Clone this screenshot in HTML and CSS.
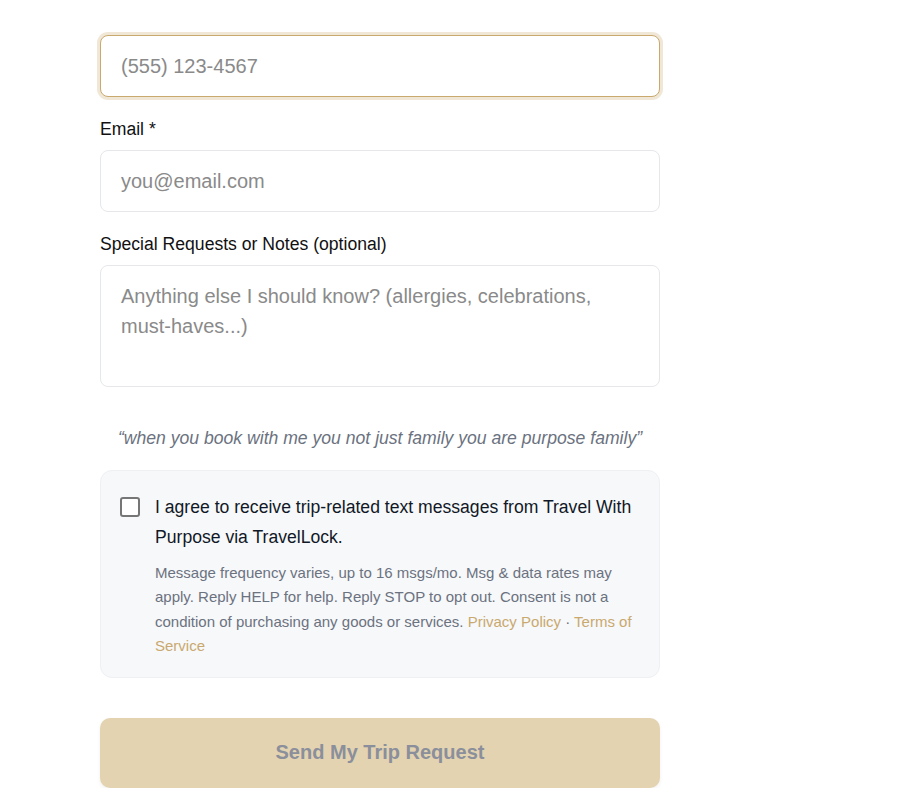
FILE: index.html
```html
<!DOCTYPE html>
<html lang="en">
<head>
<meta charset="utf-8">
<title>Trip Request</title>
<link rel="stylesheet" href="styles.css">
</head>
<body>
<form class="form">
  <div class="field">
    <input class="input focused" type="tel" placeholder="(555) 123-4567">
  </div>
  <div class="field">
    <label class="label">Email *</label>
    <input class="input" type="email" placeholder="you@email.com">
  </div>
  <div class="field">
    <label class="label">Special Requests or Notes (optional)</label>
    <textarea class="input textarea" rows="3" placeholder="Anything else I should know? (allergies, celebrations, must-haves...)"></textarea>
  </div>
  <p class="quote">“when you book with me you not just family you are purpose family”</p>
  <div class="consent">
    <span class="check"></span>
    <div class="consent-body">
      <p class="consent-main">I agree to receive trip-related text messages from Travel With Purpose via TravelLock.</p>
      <p class="consent-fine">Message frequency varies, up to 16 msgs/mo. Msg &amp; data rates may apply. Reply HELP for help. Reply STOP to opt out. Consent is not a condition of purchasing any goods or services. <a href="#" class="link">Privacy Policy</a> · <a href="#" class="link">Terms of Service</a></p>
    </div>
  </div>
  <button type="button" class="submit">Send My Trip Request</button>
</form>
</body>
</html>
```
FILE: styles.css
```css
* { box-sizing: border-box; }
html, body { margin: 0; padding: 0; background: #ffffff; }
body {
  font-family: "Liberation Sans", Arial, sans-serif;
  color: #111827;
}
.form {
  width: 560px;
  margin: 35px 0 0 100px;
  display: flex;
  flex-direction: column;
}
.field {
  display: flex;
  flex-direction: column;
  margin-bottom: 22px;
}
.label {
  font-size: 17.6px;
  line-height: 21px;
  margin-bottom: 10px;
  color: #111111;
}
.input {
  width: 100%;
  font-family: "Liberation Sans", Arial, sans-serif;
  font-size: 20px;
  line-height: 30px;
  padding: 15px 20px;
  border: 1px solid #e5e7eb;
  border-radius: 8px;
  background: #fff;
  color: #111;
  outline: none;
  display: block;
}
.input::placeholder { color: #8a8a8a; }
.focused {
  border-color: #c9a96e;
  box-shadow: 0 0 0 3px rgba(201, 169, 110, 0.28);
}
.textarea {
  resize: none;
  height: 122px;
}
.quote {
  margin: 16px 0 19px;
  text-align: center;
  font-style: italic;
  font-size: 17.6px;
  line-height: 26px;
  color: #6b7280;
}
.consent {
  display: flex;
  gap: 15px;
  padding: 21px 20px 18px 19px;
  background: #f7f8fa;
  border: 1px solid #eef0f3;
  border-radius: 12px;
}
.check {
  flex: none;
  width: 20px;
  height: 20px;
  margin-top: 5px;
  border: 2px solid #767676;
  border-radius: 3px;
  background: #fff;
}
.consent-body { flex: 1; }
.consent-main {
  margin: 0 0 9px;
  font-size: 17.6px;
  line-height: 30px;
  color: #111827;
}
.consent-fine {
  margin: 0;
  font-size: 15px;
  line-height: 24.4px;
  color: #6b7280;
}
.link { color: #c9a96e; text-decoration: none; }
.submit {
  margin-top: 40px;
  height: 70px;
  border: none;
  border-radius: 10px;
  background: #e3d3b1;
  color: #8a8f9b;
  font-family: "Liberation Sans", Arial, sans-serif;
  font-size: 20px;
  font-weight: bold;
  box-shadow: 0 2px 4px rgba(0,0,0,0.06);
}
```
